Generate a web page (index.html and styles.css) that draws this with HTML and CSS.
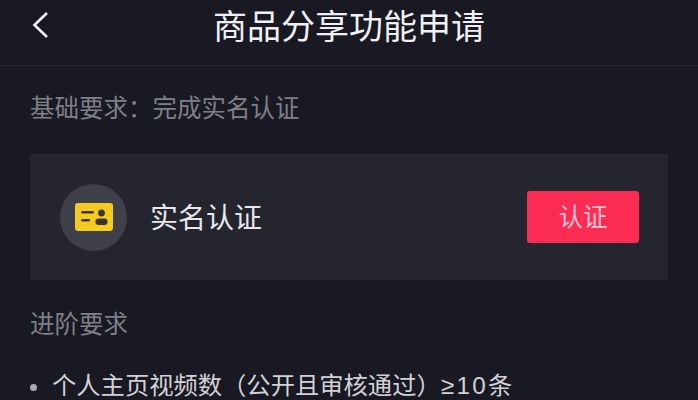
FILE: index.html
```html
<!DOCTYPE html>
<html lang="zh-CN">

<head>
    <meta charset="UTF-8">
    <meta name="viewport" content="width=device-width, initial-scale=1.0">
    <title>商品分享功能申请</title>
    <link rel="stylesheet" href="styles.css">
</head>

<body>
    <div class="header">
        <svg class="back" width="20" height="30" viewBox="0 0 20 30">
            <path d="M17 3 L4.5 15 L17 27" fill="none" stroke="#f2f2f3" stroke-width="2.6" />
        </svg>
        <h1 class="title">商品分享功能申请</h1>
    </div>
    <div class="main">
        <p class="label basic">基础要求&#xFF1A;完成实名认证</p>
        <div class="card">
            <div class="circle">
                <svg width="38" height="28" viewBox="0 0 38 28">
                    <rect x="0" y="0" width="38" height="28" rx="3" fill="#f3cc1f" />
                    <rect x="6" y="8" width="13" height="2.6" rx="1.3" fill="#3a3528" />
                    <rect x="6" y="16" width="9" height="2.6" rx="1.3" fill="#3a3528" />
                    <circle cx="26.5" cy="10" r="3.4" fill="#3a3528" />
                    <rect x="20.5" y="15.5" width="12" height="6.5" rx="3.2" fill="#3a3528" />
                </svg>
            </div>
            <span class="name">实名认证</span>
            <button class="btn">认证</button>
        </div>
        <p class="label advanced">进阶要求</p>
        <ul class="list">
            <li>个人主页视频数&#xFF08;公开且审核通过&#xFF09;<span class="num">≥10</span>条</li>
        </ul>
    </div>
</body>

</html>
```

FILE: styles.css
```css
* {
    margin: 0;
    padding: 0;
    list-style: none;
    box-sizing: border-box;
}

body {
    width: 698px;
    height: 400px;
    overflow: hidden;
    background-color: #181922;
    font-family: "Liberation Sans", "Noto Sans CJK SC", sans-serif;
}

.header {
    height: 66px;
    padding-top: 6px;
    display: flex;
    align-items: flex-start;
    justify-content: center;
    position: relative;
    border-bottom: 1px solid #252630;
}

.back {
    position: absolute;
    left: 30px;
    top: 10px;
}

.title {
    font-size: 34px;
    line-height: 42px;
    font-weight: 400;
    color: #f0f0f2;
}

.main {
    padding: 0 30px;
}

.label {
    font-size: 24.5px;
    line-height: 32px;
    color: #7f8087;
}

.basic {
    padding-top: 27px;
}

.card {
    width: 638px;
    height: 126px;
    margin-top: 29px;
    padding: 0 30px;
    display: flex;
    align-items: center;
    background-color: #24252f;
}

.circle {
    width: 67px;
    height: 67px;
    border-radius: 50%;
    background-color: #3f4049;
    display: flex;
    align-items: center;
    justify-content: center;
}

.name {
    margin: 3px 0 0 23px;
    font-size: 28px;
    line-height: 36px;
    color: #e8e8ea;
}

.btn {
    margin-left: auto;
    margin-right: -1px;
    width: 112px;
    height: 52px;
    padding-bottom: 3px;
    border: 0;
    border-radius: 3px;
    background-color: #fc2c55;
    color: #f9c4d2;
    font-family: inherit;
    font-size: 24.5px;
}

.advanced {
    margin-top: 29px;
}

.list {
    margin-top: 29px;
}

.list li {
    position: relative;
    padding-left: 22px;
    font-size: 24.3px;
    line-height: 32px;
    white-space: nowrap;
    color: #d2d2d6;
}

.list li::before {
    content: "";
    position: absolute;
    left: 0;
    top: 14px;
    width: 7px;
    height: 7px;
    border-radius: 50%;
    background-color: #a9a9ae;
}

.num {
    letter-spacing: 2.3px;
}
```
